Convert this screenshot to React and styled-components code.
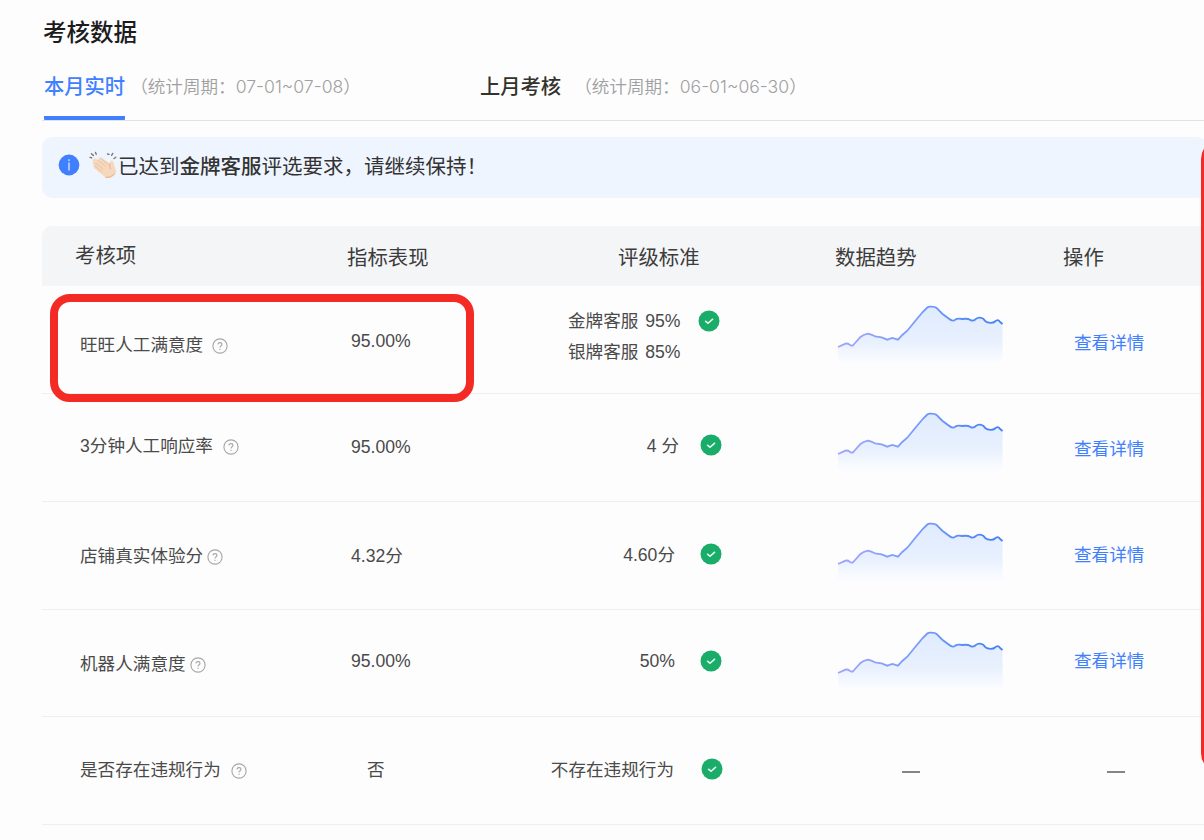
import React, { useId } from 'react';
import styled, { createGlobalStyle } from 'styled-components';

const GlobalStyle = createGlobalStyle`
    * {
        box-sizing: border-box;
    }

    body {
        margin: 0;
        background-color: #fdfdfd;
        font-family: "Liberation Sans", "Noto Sans CJK SC", sans-serif;
    }
`;

const Page = styled.main`
    position: relative;
    width: 100%;
    height: 840px;
    padding: 19px 0 0 42px;
    overflow: hidden;
    background-color: #fdfdfd;
    color: #4a4a4a;
`;

const Title = styled.h1`
    margin: 0;
    height: 28px;
    padding-left: 1px;
    line-height: 28px;
    font-size: 23.5px;
    font-weight: 500;
    color: #1c1c1e;
`;

const Tabs = styled.nav`
    display: flex;
    height: 74px;
    padding: 26px 0 0 2px;
    border-bottom: 1px solid #e1e1e8;
`;

const Tab = styled.div`
    display: flex;
    width: ${({ $width }) => $width || 'auto'};
    line-height: 28px;
    white-space: nowrap;
`;

const TabName = styled.span`
    height: 47px;
    font-size: 20.3px;
    font-weight: 500;
    color: ${({ $active }) => ($active ? '#4080ff' : '#33332b')};
    border-bottom: ${({ $active }) => ($active ? '4px solid #4080ff' : 'none')};
    border-radius: 1px;
`;

const Period = styled.span`
    margin-left: ${({ $gap }) => $gap}px;
    font-family: Inter, "Noto Sans CJK SC", sans-serif;
    font-size: 17.6px;
    font-weight: 350;
    color: #a0a0a0;
`;

const Notice = styled.div`
    display: flex;
    align-items: center;
    width: 1165px;
    height: 61px;
    margin-top: 16px;
    padding: 0 0 5px 16px;
    border-radius: 10px;
    background-color: #eff5ff;
    font-size: 20.5px;
    color: #333;
    white-space: nowrap;

    strong {
        font-weight: 500;
    }
`;

const ClapIcon = styled.svg`
    width: 28px;
    height: 28px;
    margin: 0 1px 0 9px;
`;

const Table = styled.section`
    margin-top: 28px;
`;

const Row = styled.div`
    display: grid;
    grid-template-columns: 305px 201px 287px 228px 1fr;
    height: ${({ $height }) => $height}px;
    border-bottom: 1px solid #efefef;
    font-size: 17.6px;
    line-height: 24px;
    white-space: nowrap;
`;

const HeadRow = styled(Row)`
    border-bottom: none;
    border-radius: 10px 0 0 0;
    background-color: #f4f5f7;
    font-size: 20.4px;
    color: #3c3c3c;
`;

const Cell = styled.div`
    display: flex;
    align-items: flex-start;
    padding-top: ${({ $top }) => $top}px;
    padding-left: ${({ $left }) => $left || 0}px;
`;

const HelpIcon = styled.svg`
    width: 16px;
    height: 16px;
    margin: 4.5px 0 0 ${({ $gap }) => $gap}px;
`;

const Standard = styled.div`
    width: ${({ $width }) => $width}px;
    text-align: right;
    line-height: 31px;
    word-spacing: ${({ $space }) => $space || 0}px;
    white-space: pre-line;
`;

const CheckIcon = styled.svg`
    width: 22px;
    height: 22px;
    margin: ${({ $top }) => $top}px 0 0 ${({ $gap }) => $gap}px;
`;

const Chart = styled.svg`
    width: 166px;
    height: 60px;
`;

const Detail = styled.a`
    color: #4080ff;
`;

const Dash = styled.span`
    display: block;
    width: 18px;
    height: 2px;
    background-color: #858585;
`;

const Highlight = styled.div`
    position: absolute;
    left: ${({ $x }) => $x}px;
    top: ${({ $y }) => $y}px;
    width: ${({ $w }) => $w}px;
    height: ${({ $h }) => $h}px;
    border: 8px solid #f32b24;
    border-radius: 20px;
`;

const heads = [
	{ text: '考核项', top: 18, left: 33 },
	{ text: '指标表现', top: 20, left: 0 },
	{ text: '评级标准', top: 20, left: 70 },
	{ text: '数据趋势', top: 20, left: 0 },
	{ text: '操作', top: 20, left: 0 },
];

const rows = [
	{ name: '旺旺人工满意度', nameTop: 47, gap: 9, value: '95.00%', valueTop: 43, standard: '金牌客服 95%\n银牌客服 85%', standardTop: 20, right: 132.5, space: 2, checkGap: 17, checkTop: 3.5, chartTop: 18, linkTop: 45, height: 108 },
	{ name: '3分钟人工响应率', nameTop: 40, gap: 10, value: '95.00%', valueTop: 41, standard: '4 分', standardTop: 37, right: 131, checkGap: 21, checkTop: 2.5, chartTop: 17, linkTop: 43, height: 108 },
	{ name: '店铺真实体验分', nameTop: 42, gap: 4, value: '4.32分', valueTop: 42, standard: '4.60分', standardTop: 38, right: 127, checkGap: 25, checkTop: 2.5, chartTop: 19, linkTop: 41, height: 108 },
	{ name: '机器人满意度', nameTop: 42, gap: 4, value: '95.00%', valueTop: 39, standard: '50%', standardTop: 36, right: 127, checkGap: 25, checkTop: 4, chartTop: 20, linkTop: 39, height: 107 },
	{ name: '是否存在违规行为', nameTop: 41, gap: 10, value: '否', valueTop: 41, valueLeft: 20, standard: '不存在违规行为', standardTop: 38, right: 126, checkGap: 27, checkTop: 3, height: 108 },
];

const trend = 'M1 43 L6.3 40.6 Q10 38.6 12 40.2 Q14.8 42.5 16.3 41 L23.5 33 Q26 30.8 31 29.7 Q34 30.3 38 32.3 L44.7 33.3 L50.3 35.7 L55.3 34 L61 35.7 L65.3 31 L70.3 26.7 L78 17.3 L85.7 8 L90.3 3.5 Q91.5 2.4 94 2.7 Q98 2.6 100 4.3 L105.3 9.7 L111.3 14.3 Q115.7 18 118 15.8 Q120.5 14 125 15 Q131 14.3 133 15.7 Q136.3 18 139 14.9 Q141.5 12.5 146.3 14.7 Q149 18.7 152 18.7 Q156.3 19.2 158 17.5 Q161 15 162.5 17.3 L165.5 20';

const TrendChart = () => {
	const id = useId();

	return (
		<Chart viewBox="0 0 166 60">
			<defs>
				<linearGradient id={id + 'fill'} x1="0" y1="0" x2="0" y2="1">
					<stop offset="0" stopColor="#dfebfd" />
					<stop offset="0.6" stopColor="#e8f0fe" />
					<stop offset="1" stopColor="#fcfdff" />
				</linearGradient>
				<linearGradient id={id + 'line'} x1="0" y1="0" x2="1" y2="0">
					<stop offset="0" stopColor="#a3a6f9" />
					<stop offset="0.5" stopColor="#769afc" />
					<stop offset="1" stopColor="#4080f5" />
				</linearGradient>
			</defs>
			<path d={trend + ' V60 H1 Z'} fill={`url(#${id}fill)`} />
			<path d={trend} fill="none" stroke={`url(#${id}line)`} strokeWidth="1.8" />
		</Chart>
	);
};

const Help = ({ gap }) => (
	<HelpIcon $gap={gap} viewBox="0 0 16 16" fill="none" stroke="#a6a6a6" strokeWidth="1.1">
		<circle cx="8" cy="8" r="7.1" />
		<path d="M5.9 6.4 Q6 4.6 8 4.6 Q10 4.6 10 6.3 Q10 7.2 8.8 7.9 Q8 8.5 8 9.5 M8 10.7 V11.9" />
	</HelpIcon>
);

const Check = ({ gap, top }) => (
	<CheckIcon $gap={gap} $top={top} viewBox="0 0 22 22">
		<circle cx="11" cy="11" r="10.5" fill="#1aad69" />
		<path d="M7.2 10.8 L10 13.3 L15 8.8" fill="none" stroke="#e4f7ee" strokeWidth="1.6" />
	</CheckIcon>
);

const InfoIcon = () => (
	<svg width="22" height="22" viewBox="0 0 22 22">
		<circle cx="11" cy="11" r="10.4" fill="#4080ff" />
		<path d="M11 5.2 V7 M11 8.6 V16.5" stroke="#b9d0ff" strokeWidth="1.7" />
	</svg>
);

const Clap = () => (
	<ClapIcon viewBox="0 0 28 28" fill="none" strokeLinecap="round" strokeLinejoin="round">
		<path d="M4 9 Q5 6.5 7 8 L9 9 Q10 5.5 12.5 6.5 L21 12.5 L21.5 10 Q23.5 8.5 24.5 11.5 L27 20 Q27.5 23 24 25.5 Q20 28.5 16.5 26.5 L5.5 17.5 Q3.5 15.5 5 14.5 Q2.5 12.5 4.5 11.5 Q3 10 4 9Z" fill="#f6d8bd" />
		<path d="M9 9.5 L16 15 M6.5 12 L14 18 M6 15 L13 20.5 M12.5 8 L19 13.5" stroke="#e6bf9f" strokeWidth="0.9" />
		<path d="M21 12.5 Q19.5 15 21.5 18 M17 26.5 Q22 27 25.5 23" stroke="#e3b48e" strokeWidth="1" />
		<path d="M1 6.4 L2.6 6.8 M2.4 2.8 L4.4 4.4 M6.5 1.5 L7.2 3.3 M18.5 3 L20 3.4 M22.6 4.3 L23.8 2.4 M25 7.5 L26.8 6.2" stroke="#77787b" strokeWidth="1.4" />
	</ClapIcon>
);

const App = () => {
	return (
		<>
			<GlobalStyle />
			<Page>
				<Title>考核数据</Title>
				<Tabs>
					<Tab $width="436px">
						<TabName $active>本月实时</TabName>
						<Period $gap={5}>（统计周期：07-01~07-08）</Period>
					</Tab>
					<Tab>
						<TabName>上月考核</TabName>
						<Period $gap={13}>（统计周期：06-01~06-30）</Period>
					</Tab>
				</Tabs>
				<Notice>
					<InfoIcon />
					<Clap />
					<span>已达到<strong>金牌客服</strong>评选要求，请继续保持！</span>
				</Notice>
				<Table>
					<HeadRow $height={60}>
						{heads.map((head) => (
							<Cell key={head.text} $top={head.top} $left={head.left}>{head.text}</Cell>
						))}
					</HeadRow>
					{rows.map((row) => (
						<Row key={row.name} $height={row.height}>
							<Cell $top={row.nameTop} $left={38}>
								{row.name}
								<Help gap={row.gap} />
							</Cell>
							<Cell $top={row.valueTop} $left={row.valueLeft || 4}>{row.value}</Cell>
							<Cell $top={row.standardTop}>
								<Standard $width={row.right} $space={row.space}>{row.standard}</Standard>
								<Check gap={row.checkGap} top={row.checkTop} />
							</Cell>
							{row.chartTop ? (
								<>
									<Cell $top={row.chartTop} $left={1.5}><TrendChart /></Cell>
									<Cell $top={row.linkTop} $left={11}><Detail>查看详情</Detail></Cell>
								</>
							) : (
								<>
									<Cell $top={54} $left={67}><Dash /></Cell>
									<Cell $top={54} $left={44}><Dash /></Cell>
								</>
							)}
						</Row>
					))}
				</Table>
				<Highlight $x={50} $y={294} $w={424} $h={108} />
				<Highlight $x={1201} $y={139} $w={300} $h={634} />
			</Page>
		</>
	);
};

export default App;
